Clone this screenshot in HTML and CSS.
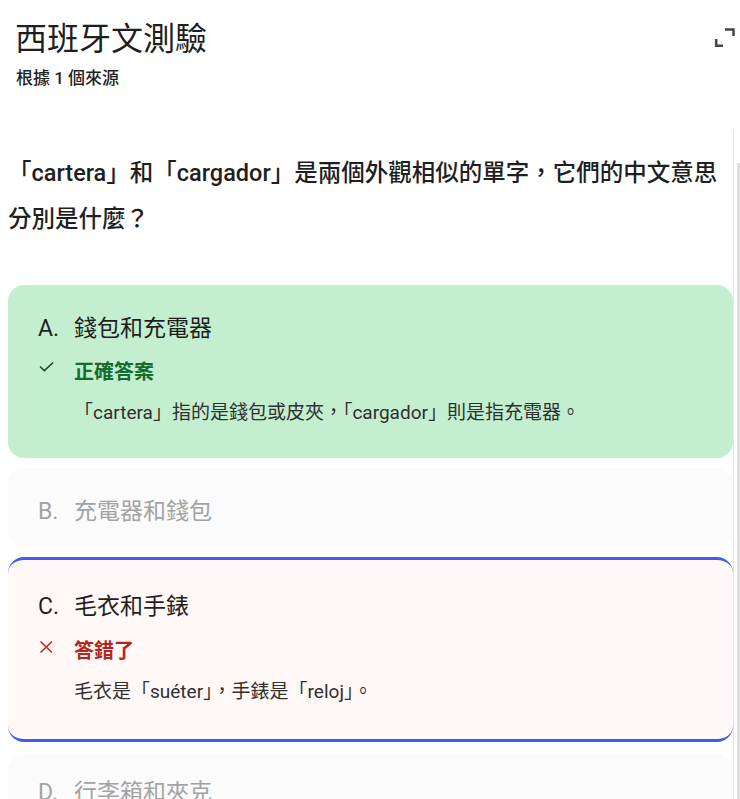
FILE: index.html
```html
<!DOCTYPE html>
<html lang="zh-Hant">
<head>
<meta charset="utf-8">
<title>西班牙文測驗</title>
<link rel="stylesheet" href="styles.css">
</head>
<body>
<header class="header">
  <div class="titles">
    <h1 class="title">西班牙文測驗</h1>
    <div class="subtitle">根據 1 個來源</div>
  </div>
  <svg class="expand" width="24" height="24" viewBox="0 0 24 24" fill="none" stroke="#444746" stroke-width="2.5" stroke-linecap="butt" stroke-linejoin="miter">
    <path d="M13 4.5H21.5V11"/>
    <path d="M4.2 14V20.8H11"/>
  </svg>
</header>
<div class="scroll">
  <div class="content">
    <p class="question">「cartera」和「cargador」是兩個外觀相似的單字，它們的中文意思分別是什麼？</p>
    <div class="card correct">
      <div class="opt"><span class="letter">A.</span><span>錢包和充電器</span></div>
      <div class="status ok">
        <span class="icon"><svg width="16" height="16" viewBox="0 0 16 16" fill="none" stroke="#1e4a2c" stroke-width="1.6"><path d="M2 5.5L6.3 9.6L15.2 1.5"/></svg></span>
        <span>正確答案</span>
      </div>
      <div class="expl">「cartera」指的是錢包或皮夾，「cargador」則是指充電器。</div>
    </div>
    <div class="card plain">
      <div class="opt"><span class="letter">B.</span><span>充電器和錢包</span></div>
    </div>
    <div class="card wrong">
      <div class="opt"><span class="letter">C.</span><span>毛衣和手錶</span></div>
      <div class="status bad">
        <span class="icon"><svg width="16" height="16" viewBox="0 0 16 16" fill="none" stroke="#c5221f" stroke-width="1.6"><path d="M2.5 1.5L14 12.5M14 1.5L2.5 12.5"/></svg></span>
        <span>答錯了</span>
      </div>
      <div class="expl">毛衣是「suéter」，手錶是「reloj」。</div>
    </div>
    <div class="card plain last">
      <div class="opt"><span class="letter">D.</span><span>行李箱和夾克</span></div>
    </div>
  </div>
  <div class="scrollbar"><div class="thumb"></div></div>
</div>
</body>
</html>
```
FILE: styles.css
```css
* { box-sizing: border-box; }
html, body { margin: 0; padding: 0; background: #ffffff; }
body {
  font-family: Roboto, "Noto Sans CJK TC", sans-serif;
  color: #1f1f1f;
  width: 740px;
  height: 799px;
  overflow: hidden;
}
.header {
  display: flex;
  justify-content: space-between;
  align-items: flex-start;
  padding: 19px 4px 0 16px;
}
.title {
  margin: 0 0 0 -1px;
  font-size: 32px;
  line-height: 40px;
  font-weight: 400;
  color: #1f1f1f;
}
.subtitle {
  margin-top: 7px;
  font-size: 17px;
  line-height: 24px;
  font-weight: 500;
  color: #1f1f1f;
}
.expand { margin-top: 6px; display: block; }
.scroll {
  display: flex;
  margin: 40px 0 0 8px;
}
.content {
  flex: 1;
  padding-top: 20px;
}
.scrollbar {
  width: 7px;
  border-left: 1px solid #e6e6e6;
  display: flex;
  justify-content: flex-end;
}
.thumb {
  width: 3px;
  height: 700px;
  margin-top: 33px;
  background: #dedede;
}
.question {
  margin: 0 0 43px 0;
  font-size: 23.5px;
  line-height: 46px;
  font-weight: 500;
  color: #1f1f1f;
}
.card {
  border-radius: 16px;
  padding: 24px 30px 31px 30px;
  margin-bottom: 10px;
}
.correct { background: #c4eed0; }
.plain {
  background: #fbfbfb;
  padding: 24px 30px 15px 30px;
  color: #a3a3a3;
}
.plain.last { padding-top: 19px; }
.wrong {
  background: #fff8f7;
  border-top: 3.5px solid #3f5cf0;
  border-bottom: 3.5px solid #3f5cf0;
  padding: 27px 30px 33px 30px;
  margin-bottom: 12px;
}
.opt {
  display: flex;
  font-size: 23px;
  line-height: 40px;
}
.letter { width: 36px; flex: none; }
.status {
  display: flex;
  align-items: center;
  margin-top: 9px;
  font-size: 20px;
  line-height: 28px;
  font-weight: 700;
}
.wrong .status { margin-top: 10px; }
.status .icon {
  width: 36px;
  flex: none;
  display: flex;
  align-items: center;
  height: 28px;
}
.status .icon svg { display: block; margin-top: -6px; }
.status.ok { color: #146c2e; }
.status.bad { color: #b3261e; }
.expl {
  margin-top: 13px;
  padding-left: 36px;
  font-size: 19px;
  line-height: 28px;
  color: #303030;
}
```
